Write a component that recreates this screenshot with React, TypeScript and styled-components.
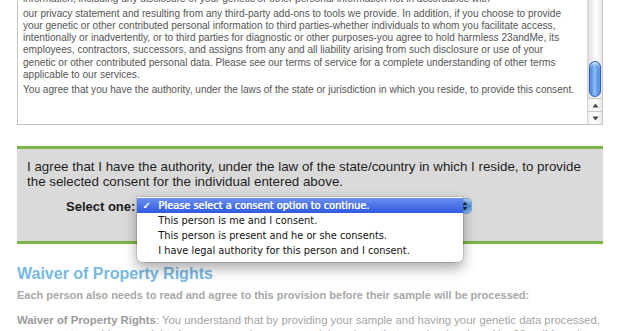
import React from "react"
import styled, { createGlobalStyle } from "styled-components"

const GlobalStyle = createGlobalStyle`
  html, body {
    margin: 0;
    padding: 0;
    background: #ffffff;
    overflow: hidden;
  }
  body {
    font-family: "Liberation Sans", Arial, Helvetica, sans-serif;
  }
`

const Page = styled.div`
  width: 620px;
  height: 331px;
  overflow: hidden;
  box-sizing: border-box;
  padding: 0 17px;
`

const ScrollBox = styled.div`
  margin-top: -30px;
  height: 155px;
  box-sizing: border-box;
  border: 1px solid #c4c4c4;
  display: flex;
  background: #fff;
`

const ScrollText = styled.div`
  flex: 1;
  overflow: hidden;
  padding: 10px 6px 0 5px;
  font-size: 10.1px;
  line-height: 12.1px;
  color: #555;
  white-space: nowrap;

  p {
    margin: 0 0 3px;
  }
`

const Scrollbar = styled.div`
  width: 14px;
  display: flex;
  flex-direction: column;
  border-left: 1px solid #d6d6d6;
`

const Track = styled.div`
  flex: 1;
  background: linear-gradient(to right, #dcdcdc, #f6f6f6 40%, #ffffff 60%, #e6e6e6);
  display: flex;
  flex-direction: column;
  justify-content: flex-end;
  padding-bottom: 1px;
`

const Thumb = styled.div`
  height: 34px;
  margin: 0 1px;
  border-radius: 7px;
  border: 1px solid #2f5fb0;
  background: linear-gradient(to right, #3a78d8, #8fbdf5 45%, #6aa3ee 70%, #3f7fdc);
  box-shadow: inset 0 2px 2px rgba(255,255,255,0.6);
`

const ArrowButton = styled.div`
  height: 12px;
  border-top: 1px solid #c8c8c8;
  background: linear-gradient(to right, #eeeeee, #ffffff 50%, #e8e8e8);
  display: flex;
  align-items: center;
  justify-content: center;
`

const Consent = styled.div`
  margin-top: 21px;
  border-top: 3px solid #7ab547;
  border-bottom: 3px solid #7ab547;
  background: #dadada;
  padding: 10px 10px 27px 10px;
`

const ConsentText = styled.div`
  font-size: 13.35px;
  line-height: 15px;
  color: #1e1e1e;
`

const SelectRow = styled.div`
  margin-top: 9px;
  display: flex;
  align-items: center;
  padding-left: 39px;
  height: 16px;
`

const SelectLabel = styled.span`
  font-weight: bold;
  font-size: 13px;
  color: #1a1a1a;
  white-space: nowrap;
  margin-right: 2px;
`

const SelectWrap = styled.div`
  position: relative;
  width: 335px;
  height: 16px;
`

const SelectButton = styled.div`
  height: 16px;
  border-radius: 4px;
  background: #f4f4f4;
  border: 1px solid #8aa6cc;
  box-sizing: border-box;
  display: flex;
  justify-content: flex-end;
`

const SelectCap = styled.div`
  width: 12px;
  height: 100%;
  border-radius: 0 4px 4px 0;
  background: linear-gradient(to bottom, #a9cdf6, #4f8fe0 50%, #7fb4f2);
  display: flex;
  align-items: center;
  justify-content: center;
`

const Menu = styled.div`
  position: absolute;
  top: -1px;
  left: 0;
  width: 326px;
  background: #ffffff;
  border-radius: 0 0 5px 5px;
  box-shadow: 0 6px 14px rgba(0,0,0,0.35), 0 0 0 1px rgba(0,0,0,0.12);
  padding: 1px 0 4px;
  z-index: 5;
`

const MenuItem = styled.div<{ $selected?: boolean }>`
  height: 15px;
  display: flex;
  align-items: center;
  font-family: "DejaVu Sans", sans-serif;
  font-size: 9.8px;
  padding-left: 21px;
  position: relative;
  white-space: nowrap;
  color: ${({ $selected }) => ($selected ? "#ffffff" : "#111111")};
  text-shadow: ${({ $selected }) => ($selected ? "0.4px 0 0 #ffffff" : "none")};
  background: ${({ $selected }) =>
    $selected ? "linear-gradient(to bottom, #6a8ff0, #2f5ae0)" : "transparent"};
`

const Check = styled.span`
  position: absolute;
  left: 5px;
  font-size: 10px;
`

const Heading = styled.h2`
  margin: 20px 0 0;
  font-size: 16px;
  line-height: 19px;
  font-weight: bold;
  color: #78b9e2;
`

const Intro = styled.p`
  margin: 5px 0 0;
  font-size: 11px;
  line-height: 14px;
  font-weight: bold;
  color: #a8a8a8;
`

const Body = styled.p`
  margin: 11px 0 0;
  font-size: 11.35px;
  line-height: 14px;
  color: #a4a4a4;
  white-space: nowrap;

  b {
    color: #9a9a9a;
  }
`

function ArrowGlyph({ up }: { up?: boolean }) {
  return (
    <svg width="7" height="5" viewBox="0 0 7 5">
      <path d={up ? "M3.5 0.5 L6.5 4.5 L0.5 4.5 Z" : "M0.5 0.5 L6.5 0.5 L3.5 4.5 Z"} fill="#444" />
    </svg>
  )
}

function SelectArrows() {
  return (
    <svg width="6" height="10" viewBox="0 0 6 10">
      <path d="M3 0.5 L5.5 4 L0.5 4 Z" fill="#1a2a4a" />
      <path d="M0.5 6 L5.5 6 L3 9.5 Z" fill="#1a2a4a" />
    </svg>
  )
}

const options = [
  "Please select a consent option to continue.",
  "This person is me and I consent.",
  "This person is present and he or she consents.",
  "I have legal authority for this person and I consent.",
]

export default function App() {
  return (
    <Page>
      <GlobalStyle />
      <ScrollBox>
        <ScrollText>
          <p>
            with applicable law. 23andMe will not be responsible for any loss of data or unauthorized access to your<br />
            information, including any disclosure of your genetic or other personal information not in accordance with<br />
          </p>
          <p>
            our privacy statement and resulting from any third-party add-ons to tools we provide. In addition, if you choose to provide<br />
            your genetic or other contributed personal information to third parties-whether individuals to whom you facilitate access,<br />
            intentionally or inadvertently, or to third parties for diagnostic or other purposes-you agree to hold harmless 23andMe, its<br />
            employees, contractors, successors, and assigns from any and all liability arising from such disclosure or use of your<br />
            genetic or other contributed personal data. Please see our terms of service for a complete understanding of other terms<br />
            applicable to our services.
          </p>
          <p>
            You agree that you have the authority, under the laws of the state or jurisdiction in which you reside, to provide this consent.
          </p>
        </ScrollText>
        <Scrollbar>
          <Track>
            <Thumb />
          </Track>
          <ArrowButton>
            <ArrowGlyph up />
          </ArrowButton>
          <ArrowButton>
            <ArrowGlyph />
          </ArrowButton>
        </Scrollbar>
      </ScrollBox>

      <Consent>
        <ConsentText>
          I agree that I have the authority, under the law of the state/country in which I reside, to provide
          the selected consent for the individual entered above.
        </ConsentText>
        <SelectRow>
          <SelectLabel>Select one:</SelectLabel>
          <SelectWrap>
            <SelectButton>
              <SelectCap>
                <SelectArrows />
              </SelectCap>
            </SelectButton>
            <Menu>
              {options.map((o, i) => (
                <MenuItem key={o} $selected={i === 0}>
                  {i === 0 && <Check>✓</Check>}
                  {o}
                </MenuItem>
              ))}
            </Menu>
          </SelectWrap>
        </SelectRow>
      </Consent>

      <Heading>Waiver of Property Rights</Heading>
      <Intro>Each person also needs to read and agree to this provision before their sample will be processed:</Intro>
      <Body>
        <b>Waiver of Property Rights</b>: You understand that by providing your sample and having your genetic data processed,<br />
        you are not acquiring any rights in any research or commercial products that may be developed by 23andMe or its
      </Body>
    </Page>
  )
}
